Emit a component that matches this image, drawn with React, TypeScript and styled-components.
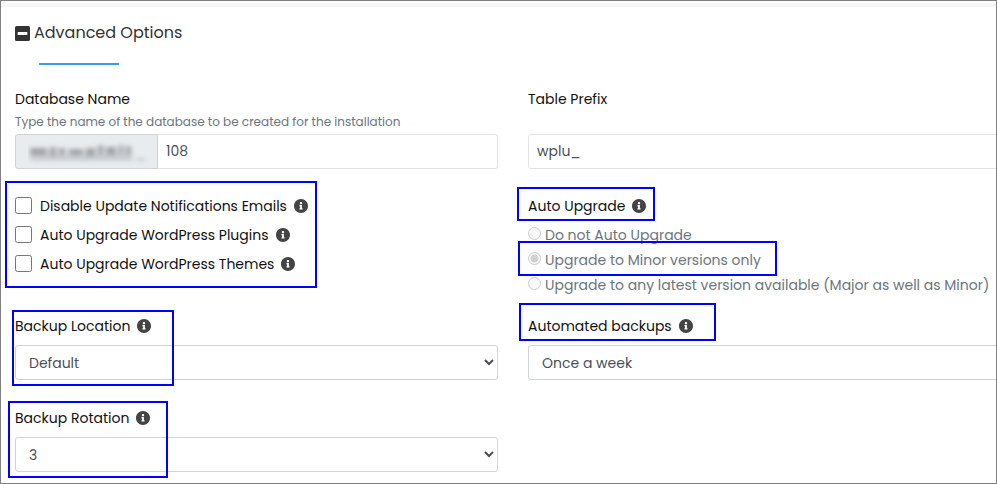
import React, { useId } from "react";
import styled, { createGlobalStyle } from "styled-components";

const GlobalStyle = createGlobalStyle`
  *, *::before, *::after { box-sizing: border-box; }
  body {
    margin: 0;
    background: #fff;
    color: #111;
    font-family: Poppins, Inter, "Liberation Sans", sans-serif;
    font-size: 14px;
    line-height: 24px;
  }
`;

const Frame = styled.main`
  min-height: 100vh;
  border: 1px solid #808080;
  overflow: hidden;
`;

const TopStrip = styled.div`
  height: 6px;
  background: linear-gradient(#fdfdfd, #f4f4f4);
`;

const Panel = styled.section`
  padding: 14px 0 10px 14px;
`;

const Heading = styled.h2`
  display: flex;
  align-items: center;
  gap: 4px;
  margin: 0;
  color: #333;
  font-size: 16px;
  font-weight: 400;
  line-height: 24px;
`;

const Underline = styled.div`
  width: 80px;
  height: 2px;
  margin: 18px 0 22px 24px;
  background: #3d96f5;
`;

const Columns = styled.div`
  display: grid;
  grid-template-columns: 1fr 1fr;
  column-gap: 30px;
  margin-right: -15px;
`;

const Cell = styled.div<{ $space?: number }>`
  position: relative;
  display: flex;
  flex-direction: column;
  margin-bottom: ${(p) => p.$space ?? 0}px;
`;

const Label = styled.label`
  line-height: 24px;
`;

const LabelRow = styled.div`
  position: relative;
  display: flex;
  align-items: center;
  gap: 7px;
  width: fit-content;
  margin-bottom: 7px;
`;

const GroupTitle = styled(LabelRow)`
  margin-bottom: 4px;
  color: #111;
`;

const Help = styled.small`
  min-height: 23px;
  color: #6c757d;
  font-size: 12px;
  line-height: 22px;
`;

const InputGroup = styled.div`
  display: flex;
`;

const Prefix = styled.span`
  display: flex;
  align-items: center;
  width: 143px;
  height: 35px;
  padding-left: 12px;
  border: 1px solid #ced4da;
  border-radius: 3px 0 0 3px;
  background: #e9ecef;
`;

const TextInput = styled.input<{ $joined?: boolean }>`
  flex: 1;
  min-width: 0;
  height: 35px;
  padding: 0 8px;
  border: 1px solid #e3e3e3;
  border-left-width: ${(p) => (p.$joined ? 0 : 1)}px;
  border-radius: ${(p) => (p.$joined ? "0 3px 3px 0" : "3px")};
  background: #fff;
  color: #495057;
  font: inherit;
`;

const Select = styled.select`
  width: 100%;
  height: 35px;
  padding: 0 0 0 9px;
  border: 1px solid #ced4da;
  border-radius: 3px;
  background: #fff;
  color: #495057;
  font: inherit;
`;

const CheckGroup = styled.div`
  position: relative;
  align-self: flex-start;
  padding-bottom: 9px;
`;

const CheckRow = styled.div`
  display: flex;
  align-items: center;
  height: 29px;
`;

const Checkbox = styled.input`
  width: 17px;
  height: 17px;
  margin: 0 8px 0 0;
`;

const CheckLabel = styled(Label)`
  margin-right: 7px;
`;

const InfoButton = styled.button`
  display: flex;
  padding: 0;
  border: 0;
  background: none;
  color: #444;
`;

const RadioSet = styled.fieldset`
  min-width: 0;
  margin: 0;
  padding: 3px 0 0;
  border: 0;
  color: #6c757d;
`;

const RadioRow = styled.div`
  position: relative;
  display: flex;
  align-items: center;
  gap: 4px;
  width: fit-content;
  height: 25px;
  white-space: nowrap;
`;

const Radio = styled.input`
  width: 13px;
  height: 13px;
  margin: 0 0 2px;
`;

const Highlight = styled.span<{ $inset: string; $width?: number }>`
  position: absolute;
  inset: ${(p) => p.$inset};
  width: ${(p) => (p.$width ? p.$width + "px" : "auto")};
  z-index: 1;
  border: 2px solid #00f;
  pointer-events: none;
`;

const MinusIcon = () => (
  <svg width="15" height="15" viewBox="0 0 448 448" aria-hidden="true">
    <rect width="448" height="448" rx="48" fill="#333" />
    <rect x="80" y="178" width="288" height="92" rx="12" fill="#fff" />
  </svg>
);

const Info = ({ about }: { about: string }) => (
  <InfoButton type="button" aria-label={"About " + about}>
    <svg width="14" height="14" viewBox="8 8 496 496" aria-hidden="true">
      <path
        fill="currentColor"
        d="M256 8C119.043 8 8 119.083 8 256c0 136.997 111.043 248 248 248s248-111.003 248-248C504 119.083 392.957 8 256 8zm0 110c23.196 0 42 18.804 42 42s-18.804 42-42 42-42-18.804-42-42 18.804-42 42-42zm56 254c0 6.627-5.373 12-12 12h-88c-6.627 0-12-5.373-12-12v-24c0-6.627 5.373-12 12-12h12v-64h-12c-6.627 0-12-5.373-12-12v-24c0-6.627 5.373-12 12-12h64c6.627 0 12 5.373 12 12v100h12c6.627 0 12 5.373 12 12v24z"
      />
    </svg>
  </InfoButton>
);

const MaskedPrefix = () => (
  <svg width="124" height="26" viewBox="0 0 124 26" role="img" aria-label="Hidden prefix">
    <defs>
      <filter id="soften" x="-10%" y="-40%" width="120%" height="180%">
        <feGaussianBlur stdDeviation="2.6 2.2" />
      </filter>
    </defs>
    <g filter="url(#soften)" fill="#5d6267">
      <path opacity=".52" d="M2 9h17v7H2zM22 8h6v9h-6zM31 9h6v7h-6zM41 10h14v6H41zM58 9h9v8h-9zM70 6h5v10h-5zM78 8h10v8H78zM91 6h4v10h-4zM98 7h5v9h-5z" />
      <path opacity=".22" d="M2 16h102v6H2z" />
      <path opacity=".25" d="M108 19h9v3h-9z" />
    </g>
  </svg>
);

function CheckOption({ text }: { text: string }) {
  const id = useId();
  return (
    <CheckRow>
      <Checkbox type="checkbox" id={id} />
      <CheckLabel htmlFor={id}>{text}</CheckLabel>
      <Info about={text} />
    </CheckRow>
  );
}

function RadioOption({ text, checked, mark }: { text: string; checked?: boolean; mark?: string }) {
  const id = useId();
  return (
    <RadioRow>
      <Radio type="radio" name="auto-upgrade" id={id} defaultChecked={checked} disabled />
      <label htmlFor={id}>{text}</label>
      {mark && <Highlight $inset={mark} />}
    </RadioRow>
  );
}

interface SelectFieldProps {
  label: string;
  options: string[];
  mark?: string;
  markWidth?: number;
  labelMark?: string;
  space?: number;
}

function SelectField({ label, options, mark, markWidth, labelMark, space }: SelectFieldProps) {
  const id = useId();
  return (
    <Cell $space={space}>
      <LabelRow>
        <Label htmlFor={id}>{label}</Label>
        <Info about={label} />
        {labelMark && <Highlight $inset={labelMark} />}
      </LabelRow>
      <Select id={id}>
        {options.map((o) => (
          <option key={o}>{o}</option>
        ))}
      </Select>
      {mark && <Highlight $inset={mark} $width={markWidth} />}
    </Cell>
  );
}

export default function App() {
  return (
    <Frame>
      <GlobalStyle />
      <TopStrip />
      <Panel>
        <Heading>
          <MinusIcon />
          Advanced Options
        </Heading>
        <Underline />
        <Columns>
          <Cell $space={22}>
            <Label htmlFor="db-name">Database Name</Label>
            <Help id="db-help">Type the name of the database to be created for the installation</Help>
            <InputGroup>
              <Prefix>
                <MaskedPrefix />
              </Prefix>
              <TextInput $joined id="db-name" aria-describedby="db-help" defaultValue="108" />
            </InputGroup>
          </Cell>
          <Cell $space={22}>
            <Label htmlFor="table-prefix">Table Prefix</Label>
            <Help />
            <InputGroup>
              <TextInput id="table-prefix" defaultValue="wplu_" />
            </InputGroup>
          </Cell>

          <Cell $space={27}>
            <CheckGroup>
              <CheckOption text="Disable Update Notifications Emails" />
              <CheckOption text="Auto Upgrade WordPress Plugins" />
              <CheckOption text="Auto Upgrade WordPress Themes" />
              <Highlight $inset="-10px -9px -1px -10px" />
            </CheckGroup>
          </Cell>
          <RadioSet aria-label="Auto Upgrade">
            <GroupTitle>
              <span>Auto Upgrade</span>
              <Info about="Auto Upgrade" />
              <Highlight $inset="-7px -9px -3px -11px" />
            </GroupTitle>
            <RadioOption text="Do not Auto Upgrade" />
            <RadioOption text="Upgrade to Minor versions only" checked mark="-6px -16px -4px -10px" />
            <RadioOption text="Upgrade to any latest version available (Major as well as Minor)" />
          </RadioSet>

          <SelectField
            label="Backup Location"
            options={["Default"]}
            mark="-4px auto -6px -3px"
            markWidth={162}
            space={26}
          />
          <SelectField
            label="Automated backups"
            options={["Once a week", "Once a day", "Once a month"]}
            labelMark="-11px -23px -3px -9px"
            space={26}
          />
          <SelectField
            label="Backup Rotation"
            options={["3", "1", "2", "4"]}
            mark="-5px auto -6px -7px"
            markWidth={160}
          />
        </Columns>
      </Panel>
    </Frame>
  );
}
